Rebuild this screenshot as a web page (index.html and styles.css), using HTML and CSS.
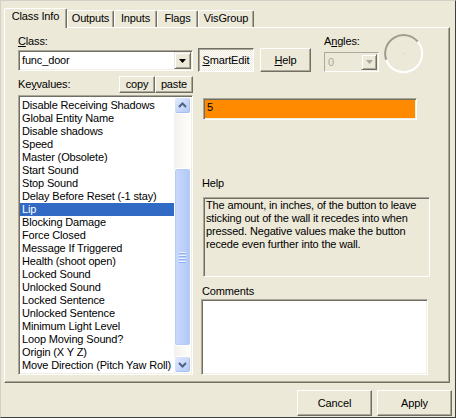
FILE: index.html
```html
<!DOCTYPE html>
<html lang="en">
<head>
<meta charset="utf-8">
<title>Object Properties</title>
<link rel="stylesheet" href="styles.css">
</head>
<body>
<div class="window">
  <div class="tabs">
    <div class="tab tab-classinfo active">Class Info</div>
    <div class="tab tab-outputs">Outputs</div>
    <div class="tab tab-inputs">Inputs</div>
    <div class="tab tab-flags">Flags</div>
    <div class="tab tab-visgroup">VisGroup</div>
  </div>

  <div class="panel">
    <div class="col-left">
      <div class="lbl"><u>C</u>lass:</div>
      <div class="combo class-combo">
        <span class="combo-text">func_door</span>
        <span class="drop-btn">
          <svg width="7" height="4" viewBox="0 0 7 4"><polygon points="0,0 7,0 3.5,4" fill="#000"/></svg>
        </span>
      </div>

      <div class="kv-head">
        <span class="lbl kv-lbl">Ke<u>y</u>values:</span>
        <button class="btn btn-small btn-copy">copy</button>
        <button class="btn btn-small btn-paste">paste</button>
      </div>

      <div class="listbox">
        <ul class="items">
          <li>Disable Receiving Shadows</li>
          <li>Global Entity Name</li>
          <li>Disable shadows</li>
          <li>Speed</li>
          <li>Master (Obsolete)</li>
          <li>Start Sound</li>
          <li>Stop Sound</li>
          <li>Delay Before Reset (-1 stay)</li>
          <li class="selected">Lip</li>
          <li>Blocking Damage</li>
          <li>Force Closed</li>
          <li>Message If Triggered</li>
          <li>Health (shoot open)</li>
          <li>Locked Sound</li>
          <li>Unlocked Sound</li>
          <li>Locked Sentence</li>
          <li>Unlocked Sentence</li>
          <li>Minimum Light Level</li>
          <li>Loop Moving Sound?</li>
          <li>Origin (X Y Z)</li>
          <li>Move Direction (Pitch Yaw Roll)</li>
        </ul>
        <div class="vscroll">
          <div class="sb-btn">
            <svg width="15" height="15" viewBox="0 0 15 15"><polyline points="4,9 7.5,5.5 11,9" fill="none" stroke="#4D6185" stroke-width="2"/></svg>
          </div>
          <div class="sb-track">
            <div class="sb-thumb">
              <span class="grip"></span><span class="grip"></span><span class="grip"></span><span class="grip"></span>
            </div>
          </div>
          <div class="sb-btn">
            <svg width="15" height="15" viewBox="0 0 15 15"><polyline points="4,6 7.5,9.5 11,6" fill="none" stroke="#4D6185" stroke-width="2"/></svg>
          </div>
        </div>
      </div>
    </div>

    <div class="col-right">
      <div class="toprow">
        <button class="btn btn-toggle on"><u>S</u>martEdit</button>
        <button class="btn btn-help"><u>H</u>elp</button>
        <div class="angles">
          <div class="lbl">A<u>n</u>gles:</div>
          <div class="combo angle-combo disabled">
            <span class="combo-text">0</span>
            <span class="drop-btn">
              <svg width="7" height="4" viewBox="0 0 7 4"><polygon points="0,0 7,0 3.5,4" fill="#ACA899"/></svg>
            </span>
          </div>
        </div>
        <svg class="angle-dial" width="41" height="41" viewBox="0 0 41 41">
          <path d="M3.2 26.8 A18.5 18.5 0 0 1 34.7 8.6" fill="none" stroke="#9E9C8F" stroke-width="2"/>
          <path d="M34.7 8.6 A18.5 18.5 0 1 1 3.2 26.8" fill="none" stroke="#FFFFFF" stroke-width="2"/>
          <rect x="20" y="20" width="1" height="1" fill="#C9C6B6"/>
        </svg>
      </div>

      <div class="value-edit">5</div>

      <div class="lbl help-lbl">Help</div>
      <div class="help-box">The amount, in inches, of the button to leave<br>sticking out of the wall it recedes into when<br>pressed. Negative values make the button<br>recede even further into the wall.</div>

      <div class="lbl comments-lbl">Comments</div>
      <div class="comments"></div>
    </div>
  </div>

  <div class="footer">
    <button class="btn btn-dlg">Cancel</button>
    <button class="btn btn-dlg">Apply</button>
  </div>
</div>
</body>
</html>
```

FILE: styles.css
```css
* {
  box-sizing: border-box;
}

html,
body {
  margin: 0;
  padding: 0;
  background: #ECE9D8;
}

body {
  font: 11px/13px "Liberation Sans", Arial, sans-serif;
  letter-spacing: -0.15px;
  color: #000;
}

u {
  text-decoration: underline;
  text-underline-offset: 1px;
}

/* dialog frame */
.window {
  width: 456px;
  height: 418px;
  border: 1px solid;
  border-color: #D4D0C8 #404040 #404040 #D4D0C8;
  background: #ECE9D8;
  display: flex;
  flex-direction: column;
}

/* tab strip */
.tabs {
  display: flex;
  align-items: flex-end;
  height: 26px;
  padding-left: 3px;
  position: relative;
  z-index: 1;
}

.tab {
  height: 17px;
  padding-top: 1px;
  text-align: center;
  white-space: nowrap;
  background: #ECE9D8;
  border-top: 1px solid #FFFFFF;
  border-left: 1px solid #FFFFFF;
  border-right: 1px solid #716F64;
  box-shadow: inset -1px 0 #ACA899;
  border-radius: 2px 2px 0 0;
}

.tab.active {
  height: 20px;
  margin-bottom: -1px;
}

.tab-classinfo { width: 63px; }
.tab-outputs   { width: 47px; }
.tab-inputs    { width: 43px; }
.tab-flags     { width: 41px; }
.tab-visgroup  { width: 56px; }

/* tab page */
.panel {
  margin-left: 3px;
  width: 446px;
  height: 356px;
  border: 1px solid;
  border-color: #FFFFFF #716F64 #716F64 #FFFFFF;
  box-shadow: inset -1px -1px #ACA899;
  display: flex;
  gap: 5px;
  padding: 7px 0 0 13px;
  position: relative;
  z-index: 0;
}

.lbl {
  height: 13px;
  line-height: 13px;
  white-space: nowrap;
}

.col-left {
  width: 175px;
  display: flex;
  flex-direction: column;
}

.col-right {
  flex: 1;
  display: flex;
  flex-direction: column;
}

/* sunken field border shared by edits, combos and the list */
.combo,
.listbox,
.value-edit,
.help-box,
.comments {
  border: 1px solid;
  border-color: #ACA899 #FFFFFF #FFFFFF #ACA899;
  box-shadow: inset 1px 1px #716F64, inset -1px -1px #F1EFE2;
}

.combo {
  display: flex;
  align-items: center;
  height: 21px;
  padding: 1px;
  background: #FFFFFF;
}

.class-combo {
  margin-top: 2px;
}

.combo-text {
  flex: 1;
  padding-left: 2px;
  white-space: nowrap;
}

.drop-btn {
  width: 17px;
  height: 17px;
  display: flex;
  align-items: center;
  justify-content: center;
  background: #ECE9D8;
  border: 1px solid;
  border-color: #ECE9D8 #716F64 #716F64 #ECE9D8;
  box-shadow: inset 1px 1px #FFFFFF, inset -1px -1px #ACA899;
}

.combo.disabled {
  background: #ECE9D8;
  box-shadow: none;
}

.combo.disabled .combo-text {
  color: #ACA899;
}

.angle-combo {
  margin-top: 4px;
  height: 20px;
  width: 55px;
}

.angle-combo .drop-btn {
  height: 16px;
  width: 16px;
}

/* push buttons */
.btn {
  font: inherit;
  letter-spacing: inherit;
  color: #000;
  margin: 0;
  padding: 0;
  background: #ECE9D8;
  border: 1px solid;
  border-color: #FFFFFF #716F64 #716F64 #FFFFFF;
  box-shadow: inset -1px -1px #ACA899;
  white-space: nowrap;
  text-align: center;
}

.kv-head {
  display: flex;
  align-items: center;
  height: 17px;
  margin-top: 5px;
}

.kv-lbl {
  flex: 1;
}

.btn-small {
  height: 17px;
  line-height: 13px;
}

.btn-copy  { width: 36px; }
.btn-paste { width: 38px; }

/* key list */
.listbox {
  margin-top: 2px;
  height: 280px;
  display: flex;
  padding: 1px;
  background: #FFFFFF;
}

.items {
  flex: 1;
  min-width: 0;
  list-style: none;
  margin: 0;
  padding: 2px 0 0;
  overflow: hidden;
}

.items li {
  height: 13px;
  line-height: 13px;
  padding-left: 2px;
  white-space: nowrap;
}

.items li.selected {
  background: #316AC5;
  color: #FFFFFF;
}

.vscroll {
  width: 17px;
  flex: none;
  display: flex;
  flex-direction: column;
  background: linear-gradient(90deg, #F3F1EC, #FEFEFB);
}

.sb-btn {
  height: 17px;
  display: flex;
  align-items: center;
  justify-content: center;
  border: 1px solid #FFFFFF;
  border-radius: 3px;
  background: linear-gradient(135deg, #E1EAFE, #B4C8F6);
  box-shadow: inset -1px -1px #A8BFF3;
}

.sb-track {
  flex: 1;
  padding-top: 54px;
}

.sb-thumb {
  height: 178px;
  border: 1px solid #FFFFFF;
  border-radius: 3px;
  background: linear-gradient(90deg, #CAD9FD, #BCCFFA 60%, #B1C6F6);
  box-shadow: inset 0 0 0 1px #B7CBF7;
  display: flex;
  flex-direction: column;
  align-items: center;
  justify-content: center;
  gap: 1px;
}

.grip {
  width: 7px;
  height: 1px;
  background: #EEF4FE;
  box-shadow: 0 1px #8CB0F8;
  margin-bottom: 1px;
}

/* right column */
.toprow {
  display: flex;
  align-items: flex-start;
  height: 38px;
}

.btn-toggle {
  width: 56px;
  height: 24px;
  margin-top: 13px;
}

.btn-toggle.on {
  border-color: #716F64 #FFFFFF #FFFFFF #716F64;
  box-shadow: inset 1px 1px #ACA899;
  background: conic-gradient(#FFFFFF 25%, #ECE9D8 0 50%, #FFFFFF 0 75%, #ECE9D8 0) 0 0 / 2px 2px;
  padding-top: 1px;
}

.btn-help {
  width: 51px;
  height: 24px;
  margin-top: 13px;
  margin-left: 6px;
}

.angles {
  margin-left: 13px;
  display: flex;
  flex-direction: column;
}

.angle-dial {
  margin-left: 4px;
  margin-top: -2px;
}

.value-edit {
  margin: 25px 0 0 5px;
  width: 214px;
  height: 22px;
  padding: 2px 3px;
  background: #FF8A00;
}

.help-lbl {
  margin: 57px 0 0 4px;
}

.help-box {
  margin: 7px 0 0 5px;
  width: 227px;
  height: 80px;
  padding: 1px 2px;
  white-space: nowrap;
  background: #ECE9D8;
  box-shadow: inset 1px 1px #716F64;
}

.comments-lbl {
  margin: 8px 0 0 4px;
}

.comments {
  margin: 1px 0 0 3px;
  width: 227px;
  height: 76px;
  background: #FFFFFF;
}

/* dialog buttons */
.footer {
  display: flex;
  justify-content: flex-end;
  gap: 5px;
  margin-top: 7px;
  padding-right: 3px;
}

.btn-dlg {
  width: 75px;
  height: 26px;
}
```
